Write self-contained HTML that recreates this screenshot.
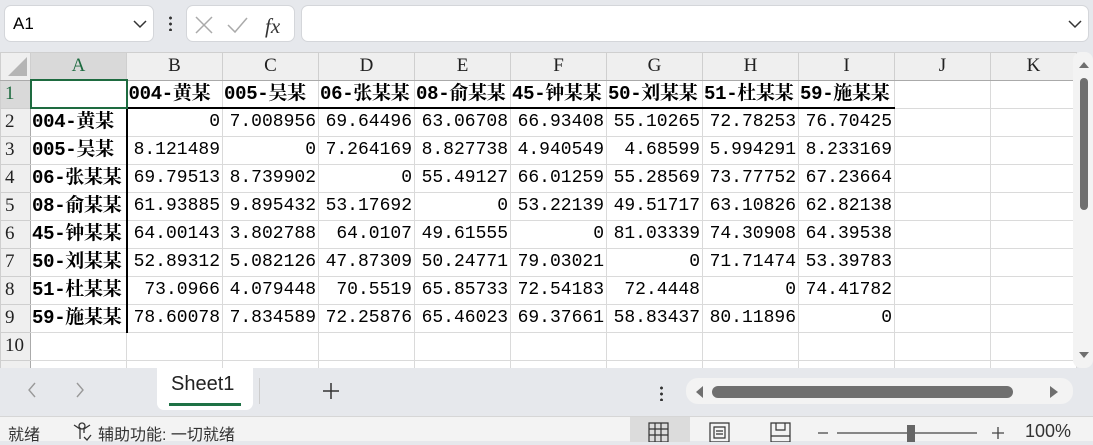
<!DOCTYPE html>
<html><head><meta charset="utf-8"><style>
*{box-sizing:border-box;margin:0;padding:0}
body{width:1093px;height:441px;overflow:hidden;background:#e6e8ec;font-family:"Liberation Sans","Noto Sans CJK SC",sans-serif;position:relative}
.box{position:absolute;background:#fff;border:1px solid #d4d6da;border-radius:7px}
table{position:absolute;left:0;top:52px;width:1076px;border-collapse:collapse;table-layout:fixed;background:#fff}
td{height:28px;border:1px solid #dadada;overflow:hidden;white-space:nowrap;font-family:"Liberation Mono","Noto Serif CJK SC",monospace;font-size:18px;color:#000;padding:0 2px;text-align:right;line-height:26px}
tr.h td{height:27px;background:#efefef;text-align:center;font-family:"Liberation Serif",serif;font-size:19px;color:#222;border-color:#cfcfcf;border-bottom:1px solid #aaa}
td.rh{background:#efefef;text-align:left;padding-left:4px;font-family:"Liberation Serif",serif;font-size:19px;color:#222;border-color:#cfcfcf;border-right:1px solid #aaa}
td.b{font-family:"Liberation Mono","Noto Serif CJK SC",monospace;font-weight:bold;text-align:left;padding-left:1px;font-size:19px;letter-spacing:-0.3px}
tr.r1 td.b{border-bottom:2px solid #000}
td.a{border-right:2px solid #000}
</style></head><body>
<div class="box" style="left:4px;top:5px;width:150px;height:37px"><span style="position:absolute;left:8px;top:8px;font-size:17px">A1</span><svg style="position:absolute;left:128px;top:14px" width="14" height="9"><path d="M1 1l6 6 6-6" stroke="#333" fill="none" stroke-width="1.5"/></svg></div>
<div style="position:absolute;left:169px;top:15px;width:3px;height:16px;background:radial-gradient(circle,#333 1.3px,transparent 1.6px) 0 0/3px 6px"></div>
<div class="box" style="left:186px;top:5px;width:109px;height:37px"><svg width="109" height="37"><path d="M9 11l16 16M25 11L9 27" stroke="#aaa" stroke-width="1.5"/><path d="M41 19l7 7 12-14" stroke="#aaa" fill="none" stroke-width="1.5"/><text x="78" y="27" font-family="Liberation Serif" font-style="italic" font-size="21" fill="#333">fx</text></svg></div>
<div class="box" style="left:301px;top:5px;width:788px;height:37px"><svg style="position:absolute;left:766px;top:14px" width="14" height="9"><path d="M1 1l6 6 6-6" stroke="#333" fill="none" stroke-width="1.5"/></svg></div>
<table>
<colgroup><col style="width:30px"><col style="width:96px"><col style="width:96px"><col style="width:96px"><col style="width:96px"><col style="width:96px"><col style="width:96px"><col style="width:96px"><col style="width:96px"><col style="width:96px"><col style="width:96px"><col style="width:86px"></colgroup>
<tr class="h"><td style="background:#efefef"><svg width="26" height="24" style="display:block"><path d="M24 3V22H5Z" fill="#b5b5b5"/></svg></td><td style="background:#d9d9d9;color:#1e6b40;border-bottom:2px solid #1e6b40">A</td><td>B</td><td>C</td><td>D</td><td>E</td><td>F</td><td>G</td><td>H</td><td>I</td><td>J</td><td>K</td></tr>
<tr class="r1"><td class="rh" style="background:#d9d9d9;color:#1e6b40">1</td><td style="border:2px solid #1e6b40"></td><td class="b">004-黄某</td><td class="b">005-吴某</td><td class="b">06-张某某</td><td class="b">08-俞某某</td><td class="b">45-钟某某</td><td class="b">50-刘某某</td><td class="b">51-杜某某</td><td class="b" style="overflow:visible">59-施某某</td><td></td><td></td></tr>
<tr><td class="rh">2</td><td class="b a">004-黄某</td><td>0</td><td>7.008956</td><td>69.64496</td><td>63.06708</td><td>66.93408</td><td>55.10265</td><td>72.78253</td><td>76.70425</td><td></td><td></td></tr>
<tr><td class="rh">3</td><td class="b a">005-吴某</td><td>8.121489</td><td>0</td><td>7.264169</td><td>8.827738</td><td>4.940549</td><td>4.68599</td><td>5.994291</td><td>8.233169</td><td></td><td></td></tr>
<tr><td class="rh">4</td><td class="b a">06-张某某</td><td>69.79513</td><td>8.739902</td><td>0</td><td>55.49127</td><td>66.01259</td><td>55.28569</td><td>73.77752</td><td>67.23664</td><td></td><td></td></tr>
<tr><td class="rh">5</td><td class="b a">08-俞某某</td><td>61.93885</td><td>9.895432</td><td>53.17692</td><td>0</td><td>53.22139</td><td>49.51717</td><td>63.10826</td><td>62.82138</td><td></td><td></td></tr>
<tr><td class="rh">6</td><td class="b a">45-钟某某</td><td>64.00143</td><td>3.802788</td><td>64.0107</td><td>49.61555</td><td>0</td><td>81.03339</td><td>74.30908</td><td>64.39538</td><td></td><td></td></tr>
<tr><td class="rh">7</td><td class="b a">50-刘某某</td><td>52.89312</td><td>5.082126</td><td>47.87309</td><td>50.24771</td><td>79.03021</td><td>0</td><td>71.71474</td><td>53.39783</td><td></td><td></td></tr>
<tr><td class="rh">8</td><td class="b a">51-杜某某</td><td>73.0966</td><td>4.079448</td><td>70.5519</td><td>65.85733</td><td>72.54183</td><td>72.4448</td><td>0</td><td>74.41782</td><td></td><td></td></tr>
<tr><td class="rh">9</td><td class="b a">59-施某某</td><td>78.60078</td><td>7.834589</td><td>72.25876</td><td>65.46023</td><td>69.37661</td><td>58.83437</td><td>80.11896</td><td>0</td><td></td><td></td></tr>
<tr><td class="rh">10</td><td></td><td></td><td></td><td></td><td></td><td></td><td></td><td></td><td></td><td></td><td></td></tr>
<tr><td class="rh"></td><td></td><td></td><td></td><td></td><td></td><td></td><td></td><td></td><td></td><td></td><td></td></tr>
</table>
<div style="position:absolute;left:1073px;top:52px;width:20px;height:316px;background:#f3f3f3;border-radius:8px"></div>
<svg style="position:absolute;left:1076px;top:58px" width="16" height="310"><path d="M3 10l5-6 5 6z" fill="#6f6f6f"/><rect x="4" y="20" width="8" height="132" rx="4" fill="#6f6f6f"/><path d="M3 294l5 6 5-6z" fill="#6f6f6f"/></svg>
<div style="position:absolute;left:0;top:368px;width:1093px;height:48px;background:#e6e8ec"></div>
<svg style="position:absolute;left:20px;top:380px" width="70" height="20"><path d="M15 3l-6 7 6 7M57 3l6 7-6 7" stroke="#999" fill="none" stroke-width="1.4"/></svg>
<div style="position:absolute;left:157px;top:368px;width:96px;height:42px;background:#fff;border-radius:0 0 7px 7px"></div>
<div style="position:absolute;left:171px;top:373px;font-size:20px;color:#222">Sheet1</div>
<div style="position:absolute;left:169px;top:403px;width:72px;height:3px;background:#1e7145"></div>
<div style="position:absolute;left:259px;top:378px;width:1px;height:26px;background:#ccc"></div>
<svg style="position:absolute;left:321px;top:381px" width="20" height="20"><path d="M10 2v16M2 10h16" stroke="#333" stroke-width="1.5"/></svg>
<div style="position:absolute;left:660px;top:385px;width:3px;height:16px;background:radial-gradient(circle,#333 1.3px,transparent 1.6px) 0 0/3px 6px"></div>
<div style="position:absolute;left:686px;top:378px;width:387px;height:26px;background:#f3f3f3;border-radius:12px"></div>
<svg style="position:absolute;left:690px;top:382px" width="380" height="20"><path d="M13 4l-7 6 7 6z" fill="#6f6f6f"/><rect x="22" y="4" width="301" height="12" rx="6" fill="#6f6f6f"/><path d="M360 4l8 6-8 6z" fill="#6f6f6f"/></svg>
<div style="position:absolute;left:0;top:416px;width:1093px;height:25px;background:#f3f3f3;border-top:1px solid #d6d6d6;font-size:16px;color:#333">
<span style="position:absolute;left:8px;top:4px">就绪</span>
<svg style="position:absolute;left:71px;top:4px" width="24" height="20"><circle cx="11" cy="5" r="3" fill="none" stroke="#333" stroke-width="1.3"/><path d="M3 4l6 4v10M19 4l-6 4v4M13 16l3 3 4-5" stroke="#333" fill="none" stroke-width="1.3"/></svg>
<span style="position:absolute;left:98px;top:4px">辅助功能: 一切就绪</span>
<div style="position:absolute;left:630px;top:0;width:60px;height:25px;background:#dcdcdc"></div>
<svg style="position:absolute;left:648px;top:5px" width="160" height="20"><path d="M1 1h19v19H1zM1 7h19M1 13h19M7 1v19M13 1v19" stroke="#333" fill="none" stroke-width="1.2"/><path d="M62 1h19v19H62zM66 5h11v11H66zM68 9h7M68 12h7" stroke="#333" fill="none" stroke-width="1.2"/><path d="M123 1h19v19H123zM128 1v7h9V1M123 14h19" stroke="#333" fill="none" stroke-width="1.2"/></svg>
<svg style="position:absolute;left:815px;top:5px" width="205" height="20"><path d="M3 11h10M22 11h140M177 11h12M183 5v12" stroke="#444" stroke-width="1.3"/><rect x="92" y="3" width="8" height="17" fill="#666"/></svg>
<span style="position:absolute;left:1025px;top:4px;font-size:18px">100%</span>
</div>
</body></html>
